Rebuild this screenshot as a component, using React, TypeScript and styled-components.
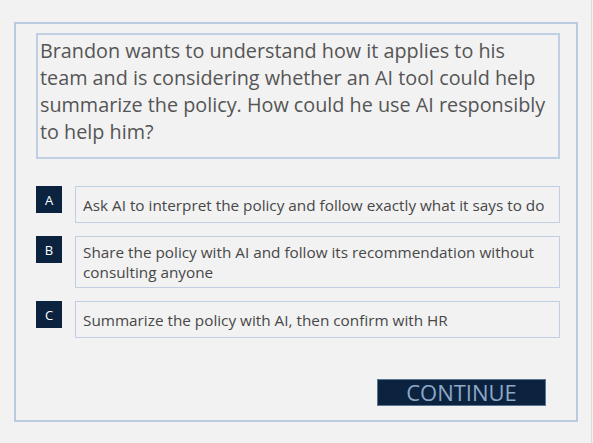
import React from "react";
import styled, { createGlobalStyle } from "styled-components";

const NAVY = "#0c2340";
const FRAME_BORDER = "#b9cbdf";

type Option = {
    letter: string;
    text: string;
};

const OPTIONS: Option[] = [
    { letter: "A", text: "Ask AI to interpret the policy and follow exactly what it says to do" },
    { letter: "B", text: "Share the policy with AI and follow its recommendation without consulting anyone" },
    { letter: "C", text: "Summarize the policy with AI, then confirm with HR" },
];

const GlobalStyle = createGlobalStyle`
    html, body {
        margin: 0;
        padding: 0;
        background: #f2f2f2;
        font-family: "Open Sans", "Liberation Sans", sans-serif;
    }
`;

export default function App() {
    return (
        <>
            <GlobalStyle />
            <Page>
                <Frame>
                    <QuestionBox>
                        Brandon wants to understand how it applies to his team and is
                        considering whether an AI tool could help summarize the policy. How
                        could he use AI responsibly to help him?
                    </QuestionBox>
                    <OptionList>
                        {OPTIONS.map((o) => (
                            <OptionRow key={o.letter}>
                                <Badge>{o.letter}</Badge>
                                <OptionBox>{o.text}</OptionBox>
                            </OptionRow>
                        ))}
                    </OptionList>
                    <ContinueButton>CONTINUE</ContinueButton>
                </Frame>
            </Page>
        </>
    );
}

const Page = styled.div`
    width: 592px;
    height: 443px;
    box-sizing: border-box;
    padding: 22px 0 0 14px;
    border-right: 1px solid #dcdcdc;
`;

const Frame = styled.div`
    width: 564px;
    height: 400px;
    box-sizing: border-box;
    border: 2px solid ${FRAME_BORDER};
    padding: 9px 16px 14px 20px;
    display: flex;
    flex-direction: column;
`;

const QuestionBox = styled.div`
    height: 126px;
    box-sizing: border-box;
    border: 2px solid #c0d0e2;
    padding: 2px 4px 0 2px;
    font-size: 19.8px;
    line-height: 27px;
    color: #555555;
`;

const OptionList = styled.div`
    display: flex;
    flex-direction: column;
    gap: 13px;
    margin-top: 27px;
`;

const OptionRow = styled.div`
    display: flex;
    align-items: flex-start;
    gap: 13px;
`;

const Badge = styled.div`
    flex: 0 0 26px;
    height: 27px;
    background: ${NAVY};
    color: #ffffff;
    font-size: 13px;
    display: flex;
    align-items: center;
    justify-content: center;
`;

const OptionBox = styled.div`
    flex: 1;
    min-height: 37px;
    box-sizing: border-box;
    border: 1.5px solid #c0d0e2;
    padding: 5px 7px;
    display: flex;
    align-items: center;
    font-size: 15.3px;
    line-height: 20px;
    color: #474747;
`;

const ContinueButton = styled.button`
    margin-top: auto;
    align-self: flex-end;
    margin-right: 14px;
    width: 169px;
    height: 27px;
    box-sizing: border-box;
    background: ${NAVY};
    border: 1px solid #5a7594;
    color: #8ea8c6;
    font-family: "Open Sans", "Liberation Sans", sans-serif;
    font-size: 22px;
    line-height: 25px;
    padding: 0;
    cursor: pointer;
`;
